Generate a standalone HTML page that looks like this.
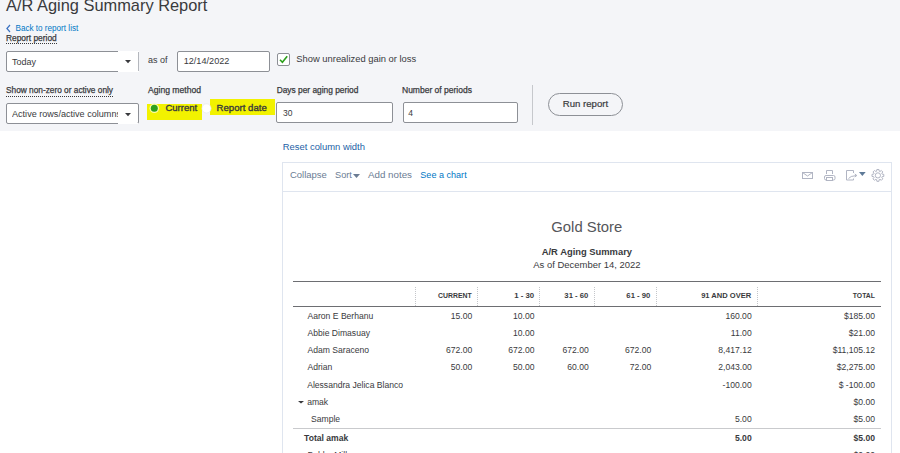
<!DOCTYPE html>
<html><head><meta charset="utf-8"><style>
html,body{margin:0;padding:0;width:900px;height:453px;overflow:hidden;background:#fff;position:relative}
body{font-family:"Liberation Sans",sans-serif;}
.t{position:absolute;white-space:nowrap;line-height:0;}
</style></head><body>
<div style="position:absolute;left:0px;top:0px;width:900px;height:131px;background:#f4f5f8"></div>
<div class="t" style="left:6.00px;top:5.32px;font-size:16.4px;font-weight:normal;color:#393a3d;">A/R Aging Summary Report</div>
<svg style="position:absolute;left:5px;top:24px" width="7" height="9" viewBox="0 0 7 9"><path d="M5 1 L1.9 4.5 L5 8" fill="none" stroke="#3b72c2" stroke-width="1.2"/></svg>
<div class="t" style="left:15.50px;top:28.98px;font-size:8.15px;font-weight:normal;color:#0077c5;">Back to report list</div>
<div class="t" style="left:6.00px;top:38.09px;font-size:8.4px;font-weight:normal;color:#393a3d;-webkit-text-stroke:0.25px #393a3d">Report period</div>
<div style="position:absolute;left:6px;top:43px;width:51px;height:1px;border-top:1px dotted #393a3d;height:0"></div>
<div style="position:absolute;left:6px;top:51px;width:131px;height:19px;background:#fff;border:1px solid #8d9096;border-radius:2px"></div>
<div style="position:absolute;left:118px;top:51px;width:21px;height:21px;background:#fff"></div>
<div style="position:absolute;left:138px;top:52px;width:1px;height:19px;background:#b4b7bd"></div>
<div class="t" style="left:12.00px;top:61.88px;font-size:9px;font-weight:normal;color:#393a3d;">Today</div>
<svg style="position:absolute;left:125px;top:60px" width="6" height="4"><path d="M0 0 L6 0 L3 3.2Z" fill="#393a3d"/></svg>
<div class="t" style="left:148.00px;top:59.88px;font-size:9px;font-weight:normal;color:#393a3d;">as of</div>
<div style="position:absolute;left:177px;top:51px;width:91px;height:18.5px;background:#fff;border:1px solid #8d9096;border-radius:2px"></div>
<div class="t" style="left:183.70px;top:61.03px;font-size:9.15px;font-weight:normal;color:#393a3d;">12/14/2022</div>
<div style="position:absolute;left:277px;top:53px;width:11px;height:11px;background:#fff;border:1px solid #8d9096;border-radius:2px"></div>
<svg style="position:absolute;left:277px;top:53px" width="13" height="13" viewBox="0 0 13 13"><path d="M3 6.8 L5.4 9.3 L10.2 3.3" fill="none" stroke="#2ca01c" stroke-width="1.6"/></svg>
<div class="t" style="left:296.30px;top:58.94px;font-size:9.4px;font-weight:normal;color:#393a3d;">Show unrealized gain or loss</div>
<div class="t" style="left:6.00px;top:90.42px;font-size:8.3px;font-weight:normal;color:#393a3d;-webkit-text-stroke:0.25px #393a3d">Show non-zero or active only</div>
<div style="position:absolute;left:6px;top:95.5px;width:107px;height:0px;border-top:1px dotted #393a3d"></div>
<div style="position:absolute;left:6px;top:103px;width:131px;height:19px;background:#fff;border:1px solid #8d9096;border-radius:2px"></div>
<div class="t" style="left:12px;top:106.85px;font-size:9.08px;color:#393a3d;width:106px;overflow:hidden;line-height:14px;height:14px">Active rows/active columns</div>
<div style="position:absolute;left:118px;top:123px;width:20px;height:1px;background:#fff"></div>
<svg style="position:absolute;left:125px;top:113px" width="6" height="4"><path d="M0 0 L6 0 L3 3.2Z" fill="#393a3d"/></svg>
<div class="t" style="left:148.00px;top:90.02px;font-size:8.6px;font-weight:normal;color:#393a3d;-webkit-text-stroke:0.25px #393a3d">Aging method</div>
<div style="position:absolute;left:147px;top:104px;width:55px;height:16px;background:#f2f200"></div>
<div style="position:absolute;left:210px;top:99px;width:65px;height:16px;background:#f2f200"></div>
<svg style="position:absolute;left:149px;top:103px" width="11" height="11"><circle cx="5.3" cy="5.3" r="4.8" fill="#fafaa8"/><circle cx="5.3" cy="5.3" r="3.5" fill="#2ca01c"/></svg>
<svg style="position:absolute;left:200.5px;top:103px" width="11" height="11"><circle cx="5.5" cy="5.4" r="4.6" fill="#fff" stroke="#e4e5e8" stroke-width="0.6"/></svg>
<div class="t" style="left:165.40px;top:108.09px;font-size:9.55px;font-weight:normal;color:#393a3d;-webkit-text-stroke:0.35px #393a3d">Current</div>
<div class="t" style="left:216.60px;top:107.57px;font-size:9.6px;font-weight:normal;color:#393a3d;-webkit-text-stroke:0.35px #393a3d">Report date</div>
<div class="t" style="left:276.70px;top:90.41px;font-size:8.35px;font-weight:normal;color:#393a3d;-webkit-text-stroke:0.25px #393a3d">Days per aging period</div>
<div style="position:absolute;left:276px;top:102px;width:115px;height:18.5px;background:#fff;border:1px solid #8d9096;border-radius:2px"></div>
<div class="t" style="left:283.00px;top:112.85px;font-size:8.5px;font-weight:normal;color:#393a3d;">30</div>
<div class="t" style="left:402.00px;top:90.35px;font-size:8.5px;font-weight:normal;color:#393a3d;-webkit-text-stroke:0.25px #393a3d">Number of periods</div>
<div style="position:absolute;left:402.5px;top:102px;width:113.5px;height:18.5px;background:#fff;border:1px solid #8d9096;border-radius:2px"></div>
<div class="t" style="left:408.30px;top:112.85px;font-size:8.5px;font-weight:normal;color:#393a3d;">4</div>
<div style="position:absolute;left:531.5px;top:85px;width:1px;height:40px;background:#c6c8cc"></div>
<div style="position:absolute;left:548px;top:93px;width:73px;height:20.5px;border:1px solid #8d9096;border-radius:12px"></div>
<div class="t" style="left:562.80px;top:104.47px;font-size:9.6px;font-weight:normal;color:#393a3d;-webkit-text-stroke:0.2px #393a3d">Run report</div>
<div class="t" style="left:282.70px;top:146.93px;font-size:9.43px;font-weight:normal;color:#1d5fa6;">Reset column width</div>
<div style="position:absolute;left:282px;top:162px;width:608px;height:400px;border:1px solid #dfe5ef;background:#fff"></div>
<div style="position:absolute;left:283px;top:191px;width:608px;height:1px;background:#dfe5ef"></div>
<div class="t" style="left:290.00px;top:174.72px;font-size:9.48px;font-weight:normal;color:#6b7c93;">Collapse</div>
<div class="t" style="left:335.00px;top:174.81px;font-size:9.2px;font-weight:normal;color:#6b7c93;">Sort</div>
<svg style="position:absolute;left:352.5px;top:173.5px" width="7" height="5"><path d="M0 0 L7 0 L3.5 4Z" fill="#6b7c93"/></svg>
<div class="t" style="left:368.00px;top:174.61px;font-size:9.77px;font-weight:normal;color:#6b7c93;">Add notes</div>
<div class="t" style="left:420.30px;top:174.86px;font-size:9.07px;font-weight:normal;color:#0077c5;">See a chart</div>
<svg style="position:absolute;left:798px;top:165px" width="95" height="20" viewBox="0 0 95 20"><g fill="none" stroke="#b1b5c3" stroke-width="1"><rect x="4.5" y="7.5" width="10" height="6"/><path d="M4.5 7.5 L9.5 11 L14.5 7.5"/><path d="M28.5 9 V5.5 H34.5 V9"/><rect x="26.5" y="10.5" width="10.5" height="4.5" rx="1.5"/><rect x="28.5" y="12.5" width="6" height="3" fill="#fff"/><path d="M55.5 8 V5.5 H48.5 V15 H55.5 V13.5"/><path d="M50.5 13.5 Q52 11 58.5 10.5 M56.8 9 L58.8 10.5 L56.8 12"/><g transform="translate(79.9,10.4)"><path d="M4.21 -1.29 L5.91 -1.04 L5.91 1.04 L4.21 1.29 L3.88 2.07 L4.91 3.44 L3.44 4.91 L2.07 3.88 L1.29 4.21 L1.04 5.91 L-1.04 5.91 L-1.29 4.21 L-2.07 3.88 L-3.44 4.91 L-4.91 3.44 L-3.88 2.07 L-4.21 1.29 L-5.91 1.04 L-5.91 -1.04 L-4.21 -1.29 L-3.88 -2.07 L-4.91 -3.44 L-3.44 -4.91 L-2.07 -3.88 L-1.29 -4.21 L-1.04 -5.91 L1.04 -5.91 L1.29 -4.21 L2.07 -3.88 L3.44 -4.91 L4.91 -3.44 L3.88 -2.07Z"/><circle r="2.6"/></g></g><path d="M61 7 L67.7 7 L64.35 10.9Z" fill="#5e7a98"/></svg>
<div class="t" style="left:286.80px;width:600px;text-align:center;top:226.65px;font-size:14.85px;font-weight:normal;color:#55565a;">Gold Store</div>
<div class="t" style="left:286.90px;width:600px;text-align:center;top:251.85px;font-size:9.39px;font-weight:bold;color:#393a3d;">A/R Aging Summary</div>
<div class="t" style="left:286.90px;width:600px;text-align:center;top:265.02px;font-size:9.46px;font-weight:normal;color:#393a3d;">As of December 14, 2022</div>
<div style="position:absolute;left:293px;top:281px;width:588px;height:1px;background:#6d6e72"></div>
<div style="position:absolute;left:293px;top:306px;width:588px;height:1px;background:#6d6e72"></div>
<div style="position:absolute;left:415px;top:287px;width:0px;height:19px;border-left:1px dotted #c4c6ca"></div>
<div style="position:absolute;left:477px;top:287px;width:0px;height:19px;border-left:1px dotted #c4c6ca"></div>
<div style="position:absolute;left:539px;top:287px;width:0px;height:19px;border-left:1px dotted #c4c6ca"></div>
<div style="position:absolute;left:594px;top:287px;width:0px;height:19px;border-left:1px dotted #c4c6ca"></div>
<div style="position:absolute;left:656px;top:287px;width:0px;height:19px;border-left:1px dotted #c4c6ca"></div>
<div style="position:absolute;left:757px;top:287px;width:0px;height:19px;border-left:1px dotted #c4c6ca"></div>
<div class="t" style="left:71.70px;width:400px;text-align:right;top:295.61px;font-size:6.9px;font-weight:bold;color:#393a3d;">CURRENT</div>
<div class="t" style="left:134.20px;width:400px;text-align:right;top:296.00px;font-size:7.8px;font-weight:bold;color:#393a3d;">1 - 30</div>
<div class="t" style="left:188.30px;width:400px;text-align:right;top:296.03px;font-size:7.7px;font-weight:bold;color:#393a3d;">31 - 60</div>
<div class="t" style="left:250.30px;width:400px;text-align:right;top:296.03px;font-size:7.7px;font-weight:bold;color:#393a3d;">61 - 90</div>
<div class="t" style="left:351.20px;width:400px;text-align:right;top:296.08px;font-size:7.56px;font-weight:bold;color:#393a3d;">91 AND OVER</div>
<div class="t" style="left:475.00px;width:400px;text-align:right;top:295.63px;font-size:6.85px;font-weight:bold;color:#393a3d;">TOTAL</div>
<div class="t" style="left:307.50px;top:316.13px;font-size:8.58px;font-weight:normal;color:#393a3d;">Aaron E Berhanu</div>
<div class="t" style="left:72.30px;width:400px;text-align:right;top:316.12px;font-size:8.6px;font-weight:normal;color:#393a3d;">15.00</div>
<div class="t" style="left:134.50px;width:400px;text-align:right;top:316.12px;font-size:8.6px;font-weight:normal;color:#393a3d;">10.00</div>
<div class="t" style="left:351.70px;width:400px;text-align:right;top:316.12px;font-size:8.6px;font-weight:normal;color:#393a3d;">160.00</div>
<div class="t" style="left:475.00px;width:400px;text-align:right;top:316.12px;font-size:8.6px;font-weight:normal;color:#393a3d;">$185.00</div>
<div class="t" style="left:307.50px;top:333.13px;font-size:8.58px;font-weight:normal;color:#393a3d;">Abbie Dimasuay</div>
<div class="t" style="left:134.50px;width:400px;text-align:right;top:333.12px;font-size:8.6px;font-weight:normal;color:#393a3d;">10.00</div>
<div class="t" style="left:351.70px;width:400px;text-align:right;top:333.12px;font-size:8.6px;font-weight:normal;color:#393a3d;">11.00</div>
<div class="t" style="left:475.00px;width:400px;text-align:right;top:333.12px;font-size:8.6px;font-weight:normal;color:#393a3d;">$21.00</div>
<div class="t" style="left:307.50px;top:350.03px;font-size:8.58px;font-weight:normal;color:#393a3d;">Adam Saraceno</div>
<div class="t" style="left:72.30px;width:400px;text-align:right;top:350.02px;font-size:8.6px;font-weight:normal;color:#393a3d;">672.00</div>
<div class="t" style="left:134.50px;width:400px;text-align:right;top:350.02px;font-size:8.6px;font-weight:normal;color:#393a3d;">672.00</div>
<div class="t" style="left:188.80px;width:400px;text-align:right;top:350.02px;font-size:8.6px;font-weight:normal;color:#393a3d;">672.00</div>
<div class="t" style="left:251.30px;width:400px;text-align:right;top:350.02px;font-size:8.6px;font-weight:normal;color:#393a3d;">672.00</div>
<div class="t" style="left:351.70px;width:400px;text-align:right;top:350.02px;font-size:8.6px;font-weight:normal;color:#393a3d;">8,417.12</div>
<div class="t" style="left:475.00px;width:400px;text-align:right;top:350.02px;font-size:8.6px;font-weight:normal;color:#393a3d;">$11,105.12</div>
<div class="t" style="left:307.50px;top:366.93px;font-size:8.58px;font-weight:normal;color:#393a3d;">Adrian</div>
<div class="t" style="left:72.30px;width:400px;text-align:right;top:366.92px;font-size:8.6px;font-weight:normal;color:#393a3d;">50.00</div>
<div class="t" style="left:134.50px;width:400px;text-align:right;top:366.92px;font-size:8.6px;font-weight:normal;color:#393a3d;">50.00</div>
<div class="t" style="left:188.80px;width:400px;text-align:right;top:366.92px;font-size:8.6px;font-weight:normal;color:#393a3d;">60.00</div>
<div class="t" style="left:251.30px;width:400px;text-align:right;top:366.92px;font-size:8.6px;font-weight:normal;color:#393a3d;">72.00</div>
<div class="t" style="left:351.70px;width:400px;text-align:right;top:366.92px;font-size:8.6px;font-weight:normal;color:#393a3d;">2,043.00</div>
<div class="t" style="left:475.00px;width:400px;text-align:right;top:366.92px;font-size:8.6px;font-weight:normal;color:#393a3d;">$2,275.00</div>
<div class="t" style="left:307.20px;top:384.93px;font-size:8.58px;font-weight:normal;color:#393a3d;">Alessandra Jelica Blanco</div>
<div class="t" style="left:351.70px;width:400px;text-align:right;top:384.92px;font-size:8.6px;font-weight:normal;color:#393a3d;">-100.00</div>
<div class="t" style="left:475.00px;width:400px;text-align:right;top:384.92px;font-size:8.6px;font-weight:normal;color:#393a3d;">$ -100.00</div>
<div class="t" style="left:307.20px;top:402.13px;font-size:8.58px;font-weight:normal;color:#393a3d;">amak</div>
<div class="t" style="left:475.00px;width:400px;text-align:right;top:402.12px;font-size:8.6px;font-weight:normal;color:#393a3d;">$0.00</div>
<div class="t" style="left:311.00px;top:418.83px;font-size:8.58px;font-weight:normal;color:#393a3d;">Sample</div>
<div class="t" style="left:351.70px;width:400px;text-align:right;top:418.82px;font-size:8.6px;font-weight:normal;color:#393a3d;">5.00</div>
<div class="t" style="left:475.00px;width:400px;text-align:right;top:418.82px;font-size:8.6px;font-weight:normal;color:#393a3d;">$5.00</div>
<div class="t" style="left:304.10px;top:437.73px;font-size:8.58px;font-weight:bold;color:#393a3d;">Total amak</div>
<div class="t" style="left:351.70px;width:400px;text-align:right;top:437.72px;font-size:8.6px;font-weight:bold;color:#393a3d;">5.00</div>
<div class="t" style="left:475.00px;width:400px;text-align:right;top:437.72px;font-size:8.6px;font-weight:bold;color:#393a3d;">$5.00</div>
<div class="t" style="left:307.50px;top:454.83px;font-size:8.58px;font-weight:normal;color:#393a3d;">Bobby Mills</div>
<div class="t" style="left:475.00px;width:400px;text-align:right;top:454.82px;font-size:8.6px;font-weight:normal;color:#393a3d;">$0.00</div>
<svg style="position:absolute;left:298px;top:401px" width="6" height="3"><path d="M0 0 L6 0 L3 2.5Z" fill="#393a3d"/></svg>
<div style="position:absolute;left:293px;top:428px;width:588px;height:1px;background:#c9cacd"></div>
</body></html>
